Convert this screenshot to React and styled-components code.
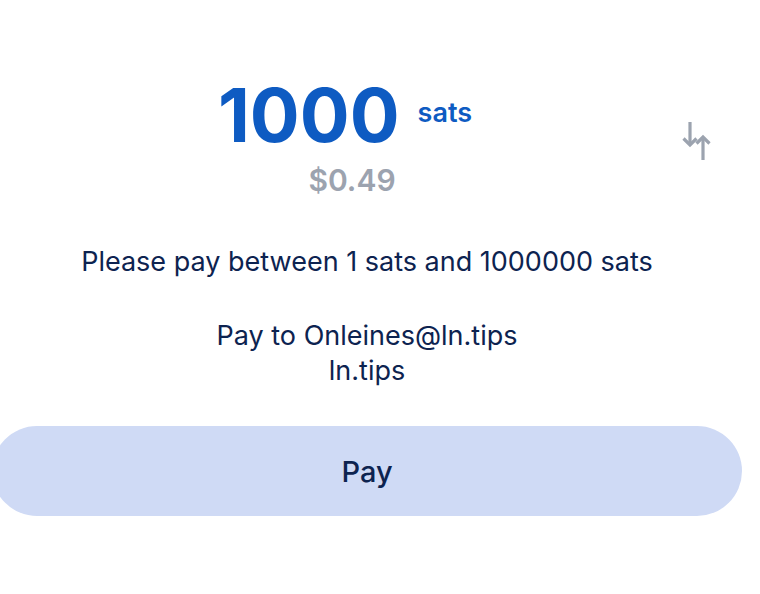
import styled, { createGlobalStyle } from 'styled-components'

const GlobalStyle = createGlobalStyle`
  html, body {
    margin: 0;
    padding: 0;
    background: #ffffff;
    font-family: Inter, 'Noto Sans', sans-serif;
    overflow: hidden;
  }
`

function SwapIcon() {
  return (
    <svg width='30' height='42' viewBox='0 0 30 42' fill='none'>
      <path d='M8 2v22' stroke='#9ca3af' strokeWidth='3.2' />
      <path d='M1.5 18.5L8 25l6.5-6.5' stroke='#9ca3af' strokeWidth='3.2' strokeLinejoin='miter' />
      <path d='M21 40V18' stroke='#9ca3af' strokeWidth='3.2' />
      <path d='M14.5 23.5L21 17l6.5 6.5' stroke='#9ca3af' strokeWidth='3.2' strokeLinejoin='miter' />
    </svg>
  )
}

export default function App() {
  return (
    <>
      <GlobalStyle />
      <Page>
        <AmountBlock>
          <AmountRow>
            <Amount>1000</Amount>
            <Unit>sats</Unit>
          </AmountRow>
          <Fiat>$0.49</Fiat>
          <SwapButton aria-label='swap'>
            <SwapIcon />
          </SwapButton>
        </AmountBlock>

        <Hint>Please pay between 1 sats and 1000000 sats</Hint>

        <Recipient>
          <Line>Pay to Onleines@ln.tips</Line>
          <Line>ln.tips</Line>
        </Recipient>

        <PayButton>Pay</PayButton>
      </Page>
    </>
  )
}

const Page = styled.div`
  width: 760px;
  height: 594px;
  display: flex;
  flex-direction: column;
  align-items: center;
  padding-top: 72px;
  box-sizing: border-box;
  color: #0d2350;
`

const AmountBlock = styled.div`
  position: relative;
  width: 100%;
  display: flex;
  flex-direction: column;
  align-items: center;
`

const AmountRow = styled.div`
  display: flex;
  align-items: flex-start;
  gap: 18px;
  margin-left: -70px;
`

const Amount = styled.div`
  font-size: 74px;
  font-weight: 700;
  line-height: 86px;
  color: #0e5bc2;
  letter-spacing: 0px;
`

const Unit = styled.div`
  font-size: 27px;
  font-weight: 600;
  line-height: 27px;
  margin-top: 27px;
  color: #0e5bc2;
`

const Fiat = styled.div`
  font-size: 30px;
  font-weight: 600;
  line-height: 36px;
  margin-top: 4px;
  margin-left: -56px;
  color: #9ca3af;
`

const SwapButton = styled.div`
  position: absolute;
  right: 48px;
  top: 48px;
`

const Hint = styled.p`
  margin: 47px 0 0 -26px;
  font-size: 27px;
  line-height: 34px;
`

const Recipient = styled.div`
  margin-top: 39px;
  margin-left: -26px;
  display: flex;
  flex-direction: column;
  align-items: center;
`

const Line = styled.div`
  font-size: 27px;
  line-height: 35px;
`

const PayButton = styled.button`
  margin-top: 38px;
  align-self: flex-start;
  margin-left: -8px;
  width: 750px;
  height: 90px;
  border: none;
  border-radius: 45px;
  background: #cfdaf5;
  font-family: Inter, 'Noto Sans', sans-serif;
  font-size: 29px;
  font-weight: 500;
  color: #0d2350;
`
